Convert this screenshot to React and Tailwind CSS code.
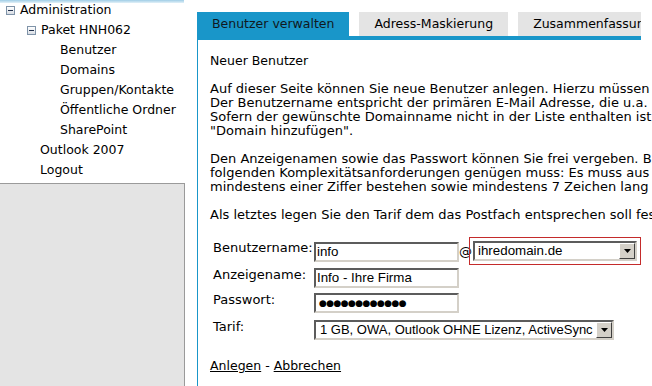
import React from 'react'

const verdana = { fontFamily: '"DejaVu Sans", Verdana, sans-serif' }

function Minus() {
  return (
    <span className="inline-flex items-center justify-center w-[9px] h-[9px] border border-[#7f93a8] bg-gradient-to-b from-white to-[#d8dde4]">
      <span className="block w-[5px] h-[1px] bg-[#1f2f4a]" />
    </span>
  )
}

function DropButton() {
  return (
    <span className="shrink-0 flex items-center justify-center w-[16px] h-[16px] bg-[#d4d0c8] border border-t-white border-l-white border-b-[#404040] border-r-[#404040]">
      <svg width="7" height="4" viewBox="0 0 7 4">
        <polygon points="0,0 7,0 3.5,4" fill="#000" />
      </svg>
    </span>
  )
}

function TextBox({ children, className = '' }) {
  return (
    <div
      className={`flex items-center h-[20px] bg-white border-2 border-t-[#5c5c5c] border-l-[#5c5c5c] border-r-[#d4d0c8] border-b-[#d4d0c8] pl-[1px] text-[13.33px] text-black whitespace-nowrap ${className}`}
      style={{ fontFamily: '"Liberation Sans", Arial, sans-serif' }}
    >
      {children}
    </div>
  )
}

function Select({ value, className = '', textCls = 'pl-[3px]' }) {
  return (
    <div
      className={`flex items-center justify-between h-[20px] bg-white border-2 border-t-[#5c5c5c] border-l-[#5c5c5c] border-r-[#d4d0c8] border-b-[#d4d0c8] text-black whitespace-nowrap overflow-hidden ${className}`}
      style={{ fontFamily: '"Liberation Sans", Arial, sans-serif' }}
    >
      <span className={textCls}>{value}</span>
      <DropButton />
    </div>
  )
}

export default function App() {
  const nav = [
    { label: 'Administration', pad: 'pl-[6px]', icon: true },
    { label: 'Paket HNH062', pad: 'pl-[27px]', icon: true },
    { label: 'Benutzer', pad: 'pl-[60px]' },
    { label: 'Domains', pad: 'pl-[60px]' },
    { label: 'Gruppen/Kontakte', pad: 'pl-[60px]' },
    { label: 'Öffentliche Ordner', pad: 'pl-[60px]' },
    { label: 'SharePoint', pad: 'pl-[60px]' },
    { label: 'Outlook 2007', pad: 'pl-[40px]' },
    { label: 'Logout', pad: 'pl-[40px]' },
  ]

  return (
    <div className="w-[652px] h-[386px] overflow-hidden bg-white flex text-[12.5px] text-black" style={verdana}>
      {/* sidebar */}
      <div className="w-[185px] shrink-0 flex flex-col">
        <div className="w-[184px] h-[3px] bg-gradient-to-b from-[#9fcde6] to-[#e3f1f8]" />
        <ul className="-mt-[3px]">
          {nav.map((n) => (
            <li key={n.label} className={`h-5 flex items-center gap-[5px] ${n.pad}`}>
              {n.icon && <Minus />}
              <span>{n.label}</span>
            </li>
          ))}
        </ul>
        <div className="mt-[3px] flex-1 bg-[#e4e4e4] border-t border-r border-[#9a9a9a]" />
      </div>

      {/* main */}
      <div className="flex-1 flex flex-col">
        <div className="ml-[1px] w-[455px] h-[3px] bg-[#1996c9]" />
        <div className="pl-[12px] pt-[12px]">
          <div className="w-[444px] flex gap-[10px] overflow-hidden">
            <div className="shrink-0 h-[24px] px-[15px] flex items-center bg-[#1996c9] text-[#101820]">Benutzer verwalten</div>
            <div className="shrink-0 h-[24px] px-[15px] flex items-center bg-[#e4e4e4]">Adress-Maskierung</div>
            <div className="shrink-0 h-[24px] px-[15px] flex items-center bg-[#e4e4e4]">Zusammenfassung</div>
          </div>
          <div className="w-[444px] h-[4px] bg-[#1996c9]" />
          <div className="w-[444px] h-[400px] border-l border-[#1996c9] pl-[12px] pt-[14px] leading-[14px] whitespace-nowrap">
            <p>Neuer Benutzer</p>
            <p className="mt-[14px] text-[13px]">
              Auf dieser Seite können Sie neue Benutzer anlegen. Hierzu müssen Sie zunächst einen Benutzernamen festlegen.<br />
              Der Benutzername entspricht der primären E-Mail Adresse, die u.a. als Login verwendet wird.<br />
              Sofern der gewünschte Domainname nicht in der Liste enthalten ist, fügen Sie diesen bitte über<br />
              "Domain hinzufügen".
            </p>
            <p className="mt-[14px] text-[13px]">
              Den Anzeigenamen sowie das Passwort können Sie frei vergeben. Bitte beachten Sie, dass das Passwort den<br />
              folgenden Komplexitätsanforderungen genügen muss: Es muss aus Groß- und Kleinbuchstaben,<br />
              mindestens einer Ziffer bestehen sowie mindestens 7 Zeichen lang sein.
            </p>
            <p className="mt-[14px] text-[13px]">Als letztes legen Sie den Tarif dem das Postfach entsprechen soll fest.</p>

            <div className="mt-[15px] text-[13px]">
              <div className="flex items-start h-[28px]">
                <span className="ml-[3px] w-[101px] mt-[4px]">Benutzername:</span>
                <TextBox className="mt-[5px] w-[145px]">info</TextBox>
                <span className="mt-[5px] w-[10px] leading-5 text-center">@</span>
                <div className="w-[172px] h-[28px] border border-[#c42b2b] p-[3px]">
                  <Select value="ihredomain.de" className="w-[164px] text-[13.33px]" />
                </div>
              </div>
              <div className="flex items-start mt-[3px]">
                <span className="ml-[3px] w-[101px]">Anzeigename:</span>
                <TextBox className="w-[145px]">Info - Ihre Firma</TextBox>
              </div>
              <div className="flex items-start mt-[5px]">
                <span className="ml-[3px] w-[101px]">Passwort:</span>
                <TextBox className="w-[145px]">
                  <span className="pl-[2px] text-[9px] tracking-[-0.6px]" style={verdana}>●●●●●●●●●●●●</span>
                </TextBox>
              </div>
              <div className="flex items-start mt-[7px]">
                <span className="ml-[3px] w-[101px]">Tarif:</span>
                <Select value="1 GB, OWA, Outlook OHNE Lizenz, ActiveSync" className="w-[300px] text-[13px]" textCls="pl-[4px]" />
              </div>
            </div>

            <p className="mt-[19px]">
              <a href="#" className="underline text-black">Anlegen</a> - <a href="#" className="underline text-black">Abbrechen</a>
            </p>
          </div>
        </div>
      </div>
    </div>
  )
}
